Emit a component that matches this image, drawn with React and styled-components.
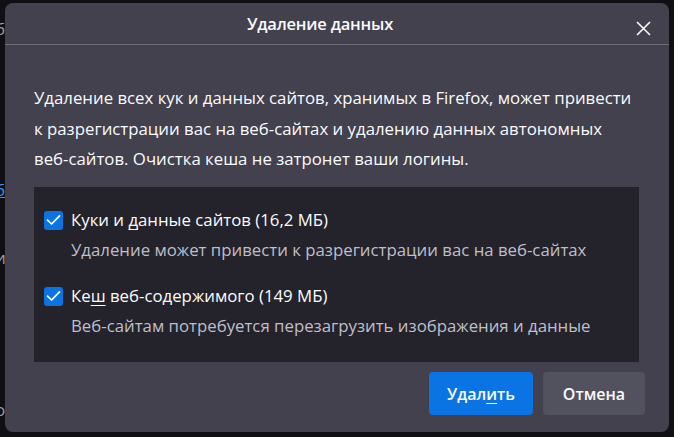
import React from 'react';
import styled, {createGlobalStyle} from 'styled-components';

const GlobalStyle = createGlobalStyle`
  html, body {
    margin: 0;
    padding: 0;
    background: #101014;
    font-family: "Open Sans", "Noto Sans", sans-serif;
  }
`;

const Page = styled.div`
    width: 674px;
    height: 437px;
    overflow: hidden;
    position: relative;
    background: #101014;
`;

const Backdrop = styled.div`
    display: flex;
    flex-direction: column;
    width: 12px;
    font-size: 17px;
`;

const Peek = styled.span`
    display: block;
    height: ${(props) => props.h}px;
    line-height: ${(props) => props.h}px;
    margin-left: -5px;
    color: ${(props) => (props.link ? '#3b8ff0' : '#9a9aa3')};
    text-decoration: ${(props) => (props.link ? 'underline' : 'none')};
`;

const Dialog = styled.div`
    position: absolute;
    left: 5px;
    top: 3px;
    width: 664px;
    height: 429px;
    box-sizing: border-box;
    background: #42414d;
    border-radius: 8px;
    display: flex;
    flex-direction: column;
    color: #fbfbfe;
`;

const Header = styled.div`
    height: 48px;
    box-sizing: border-box;
    border-bottom: 1px solid #6e6d78;
    display: flex;
    align-items: center;
    justify-content: center;
    padding-right: 34px;
    position: relative;
`;

const Title = styled.h1`
    margin: 0;
    font-size: 16.5px;
    font-weight: 600;
    letter-spacing: -0.2px;
`;

const CloseButton = styled.button`
    position: absolute;
    right: 18px;
    top: 17px;
    width: 16px;
    height: 16px;
    padding: 0;
    border: none;
    background: none;
    display: flex;
    align-items: center;
    justify-content: center;
`;

const Body = styled.div`
    flex: 1;
    display: flex;
    flex-direction: column;
    padding: 0 29px;
`;

const Intro = styled.p`
    margin: 38px 0 0 0;
    font-size: 16.8px;
    line-height: 30.6px;
    white-space: nowrap;
`;

const OptionsBox = styled.div`
    margin-top: 12px;
    height: 175px;
    width: 605px;
    box-sizing: border-box;
    background: #24232b;
    padding: 20px 0 0 10px;
    display: flex;
    flex-direction: column;
    gap: 20px;
`;

const Option = styled.div`
    display: grid;
    grid-template-columns: 19px 1fr;
    column-gap: 8px;
    row-gap: 4px;
    align-items: center;
`;

const CheckBox = styled.span`
    width: 19px;
    height: 19px;
    border-radius: 3px;
    background: #0b74e5;
    display: flex;
    align-items: center;
    justify-content: center;
`;

const Label = styled.span`
    font-size: 16.8px;
    line-height: 26px;
`;

const Description = styled.span`
    grid-column: 2;
    font-size: 16.8px;
    line-height: 26px;
    color: #bfbfc9;
`;

const AccessKey = styled.span`
    text-decoration: underline;
    text-underline-offset: 3px;
`;

const Footer = styled.div`
    display: flex;
    justify-content: flex-end;
    gap: 10px;
    padding: 10px 24px 17px 0;
`;

const Button = styled.button`
    height: 43px;
    width: ${(props) => props.w}px;
    border: none;
    border-radius: 4px;
    font-family: "Open Sans", "Noto Sans", sans-serif;
    font-size: 16px;
    font-weight: 600;
    color: #fbfbfe;
    background: ${(props) => (props.primary ? '#0b74e5' : '#52515e')};
    padding: 0;
`;

const Check = () => (
    <svg width="15" height="12" viewBox="0 0 15 12">
        <path d="M1.5 6.2 L5.6 10 L13.5 1.8" fill="none" stroke="#fff" strokeWidth="1.7" strokeLinecap="round" strokeLinejoin="round" />
    </svg>
);

const App = () => {
    return (
        <Page>
            <GlobalStyle />
            <Backdrop>
                <Peek h={14}></Peek>
                <Peek h={30}>б</Peek>
                <Peek h={96}></Peek>
                <Peek h={30}>i</Peek>
                <Peek h={5}></Peek>
                <Peek h={30} link>б</Peek>
                <Peek h={38}></Peek>
                <Peek h={30}>и</Peek>
                <Peek h={122}></Peek>
                <Peek h={30}>о</Peek>
            </Backdrop>
            <Dialog>
                <Header>
                    <Title>Удаление данных</Title>
                    <CloseButton aria-label="Закрыть">
                        <svg width="15" height="15" viewBox="0 0 15 15">
                            <path d="M1 1 L14 14 M14 1 L1 14" stroke="#fbfbfe" strokeWidth="1.6" />
                        </svg>
                    </CloseButton>
                </Header>
                <Body>
                    <Intro>
                        Удаление всех кук и данных сайтов, хранимых в Firefox, может привести
                        <br />
                        к разрегистрации вас на веб-сайтах и удалению данных автономных
                        <br />
                        веб-сайтов. Очистка кеша не затронет ваши логины.
                    </Intro>
                    <OptionsBox>
                        <Option>
                            <CheckBox><Check /></CheckBox>
                            <Label>Куки и <AccessKey>д</AccessKey>анные сайтов (16,2 МБ)</Label>
                            <Description>Удаление может привести к разрегистрации вас на веб-сайтах</Description>
                        </Option>
                        <Option>
                            <CheckBox><Check /></CheckBox>
                            <Label>Ке<AccessKey>ш</AccessKey> веб-содержимого (149 МБ)</Label>
                            <Description>Веб-сайтам потребуется перезагрузить изображения и данные</Description>
                        </Option>
                    </OptionsBox>
                </Body>
                <Footer>
                    <Button primary w={104}>Удал<AccessKey>и</AccessKey>ть</Button>
                    <Button w={102}>Отмена</Button>
                </Footer>
            </Dialog>
        </Page>
    );
};

export default App;
